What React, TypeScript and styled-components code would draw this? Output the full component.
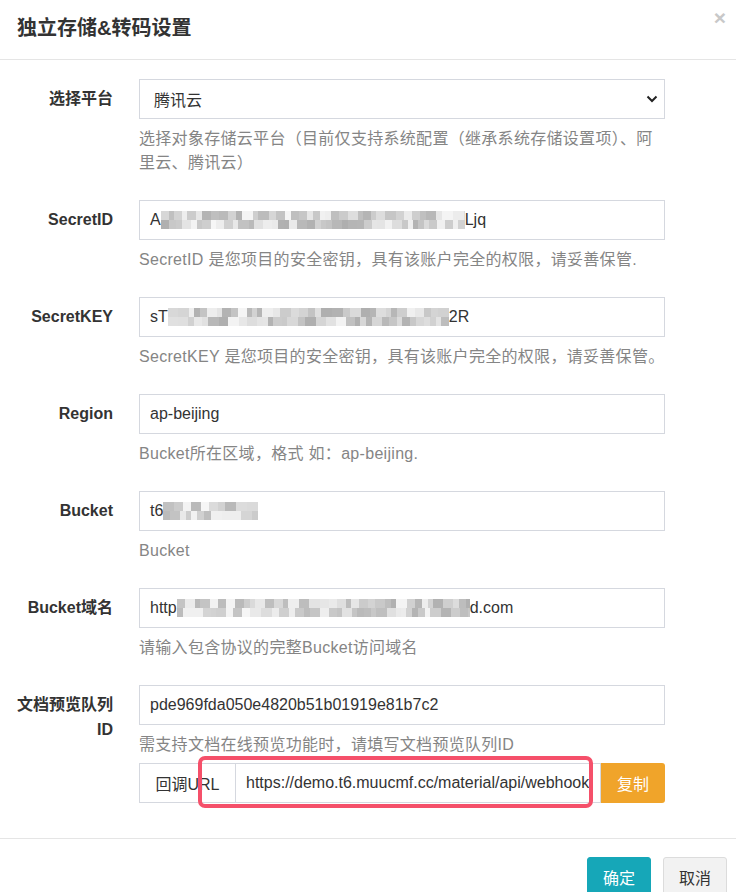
import React, { FC } from 'react';
import styled, { createGlobalStyle } from 'styled-components';

const fontStack = `"Liberation Sans", "Noto Sans CJK SC", sans-serif`;

const GlobalStyle = createGlobalStyle`
  html, body {
    margin: 0;
    padding: 0;
    background: #fff;
  }
  body {
    font-family: ${fontStack};
    color: #333;
  }
`;

const Modal = styled.div`
  width: 736px;
  height: 892px;
  overflow: hidden;
  background: #fff;
`;

const Header = styled.div`
  position: relative;
  height: 60px;
  padding: 15px 17px 0;
  box-sizing: border-box;
  border-bottom: 1px solid #e5e5e5;
`;

const Title = styled.h4`
  margin: 0;
  font-size: 20px;
  line-height: 26px;
  font-weight: bold;
  color: #333;
`;

const Close = styled.span`
  position: absolute;
  top: 6px;
  right: 10px;
  font-size: 21px;
  font-weight: bold;
  color: #c8c8c8;
  line-height: 24px;
`;

const Body = styled.div`
  padding: 19px 0 10px 15px;
`;

const Row = styled.div`
  display: grid;
  grid-template-columns: 98px 526px;
  column-gap: 26px;
  margin-bottom: 25px;
`;

const Label = styled.label`
  text-align: right;
  font-size: 16px;
  font-weight: bold;
  line-height: 25px;
  padding-top: 7px;
  color: #333;
`;

const Field = styled.div`
  display: flex;
  flex-direction: column;
`;

const Input = styled.div`
  height: 40px;
  box-sizing: border-box;
  border: 1px solid #d5d8df;
  padding: 0 10px;
  display: flex;
  align-items: center;
  font-size: 16px;
  color: #333;
  white-space: nowrap;
  overflow: hidden;
`;

const Select = styled(Input)`
  justify-content: space-between;
  padding: 0 6px 0 14px;
`;

const Help = styled.div`
  margin-top: 8px;
  font-size: 16px;
  line-height: 24px;
  letter-spacing: 0.3px;
  color: #858585;
`;

const MosaicStrip = styled.span`
  display: inline-flex;
  flex-direction: column;
  height: 18px;
`;

const MosaicLine = styled.span`
  display: flex;
  height: 9px;
`;

const Cell = styled.span`
  display: block;
  height: 9px;
`;

const Group = styled.div`
  position: relative;
  display: flex;
  height: 40px;
  margin-top: 6px;
`;

const Addon = styled.span`
  width: 96px;
  box-sizing: border-box;
  border: 1px solid #d5d8df;
  border-right: none;
  display: flex;
  align-items: center;
  justify-content: center;
  font-size: 16px;
  color: #333;
`;

const GroupInput = styled(Input)`
  flex: 1;
  padding: 0 8px 0 10px;
`;

const CopyButton = styled.button`
  width: 64px;
  border: none;
  border-radius: 0 3px 3px 0;
  background: #f0a42a;
  color: #fff;
  font-family: ${fontStack};
  font-size: 16px;
`;

const Highlight = styled.span`
  position: absolute;
  left: 59px;
  top: -7px;
  width: 395px;
  height: 52px;
  box-sizing: border-box;
  border: 4px solid #f5506a;
  border-radius: 7px;
  pointer-events: none;
`;

const Footer = styled.div`
  border-top: 1px solid #e5e5e5;
  padding: 18px 9px 0 0;
  display: flex;
  justify-content: flex-end;
  gap: 12px;
`;

const Button = styled.button<{ primary?: boolean }>`
  width: 64px;
  height: 40px;
  border-radius: 3px;
  font-family: ${fontStack};
  font-size: 16px;
  border: 1px solid ${(p) => (p.primary ? '#16a7b8' : '#dcdcdc')};
  background: ${(p) => (p.primary ? '#16a7b8' : '#f2f2f2')};
  color: ${(p) => (p.primary ? '#fff' : '#333')};
`;

const Chevron: FC = () => (
  <svg width="12" height="8" viewBox="0 0 12 8">
    <path d="M1.5 1.5 L6 6 L10.5 1.5" fill="none" stroke="#222" strokeWidth="2" />
  </svg>
);

// pixelated "blurred" secret, tones picked from a small seeded generator
const Mosaic: FC<{ w: number; seed: number }> = ({ w, seed }) => {
  let s = seed;
  const rnd = () => {
    s = (s * 9301 + 49297) % 233280;
    return s / 233280;
  };
  const line = () => {
    const cells: { w: number; c: number }[] = [];
    let used = 0;
    while (used < w) {
      const cw = Math.min(w - used, 5 + Math.floor(rnd() * 7));
      cells.push({ w: cw, c: 175 + Math.floor(rnd() * 72) });
      used += cw;
    }
    return cells;
  };
  const rows = [line(), line()];
  return (
    <MosaicStrip>
      {rows.map((r, i) => (
        <MosaicLine key={i}>
          {r.map((c, j) => (
            <Cell key={j} style={{ width: c.w, background: `rgb(${c.c},${c.c},${c.c})` }} />
          ))}
        </MosaicLine>
      ))}
    </MosaicStrip>
  );
};

interface FormRowProps {
  label: string;
  help?: React.ReactNode;
  extra?: React.ReactNode;
  children: React.ReactNode;
}

const FormRow: FC<FormRowProps> = ({ label, help, extra, children }) => (
  <Row>
    <Label>{label}</Label>
    <Field>
      {children}
      {help && <Help>{help}</Help>}
      {extra}
    </Field>
  </Row>
);

const App: FC = () => (
  <Modal>
    <GlobalStyle />
    <Header>
      <Title>独立存储&amp;转码设置</Title>
      <Close>×</Close>
    </Header>
    <Body>
      <FormRow label="选择平台" help="选择对象存储云平台（目前仅支持系统配置（继承系统存储设置项）、阿里云、腾讯云）">
        <Select>
          腾讯云
          <Chevron />
        </Select>
      </FormRow>
      <FormRow label="SecretID" help="SecretID 是您项目的安全密钥，具有该账户完全的权限，请妥善保管.">
        <Input>
          A<Mosaic w={304} seed={7} />Ljq
        </Input>
      </FormRow>
      <FormRow label="SecretKEY" help="SecretKEY 是您项目的安全密钥，具有该账户完全的权限，请妥善保管。">
        <Input>
          sT<Mosaic w={281} seed={13} />2R
        </Input>
      </FormRow>
      <FormRow label="Region" help="Bucket所在区域，格式 如：ap-beijing.">
        <Input>ap-beijing</Input>
      </FormRow>
      <FormRow label="Bucket" help="Bucket">
        <Input>
          t6<Mosaic w={95} seed={21} />
        </Input>
      </FormRow>
      <FormRow label="Bucket域名" help="请输入包含协议的完整Bucket访问域名">
        <Input>
          http<Mosaic w={293} seed={33} />d.com
        </Input>
      </FormRow>
      <FormRow
        label="文档预览队列ID"
        help="需支持文档在线预览功能时，请填写文档预览队列ID"
        extra={
          <Group>
            <Addon>回调URL</Addon>
            <GroupInput>https://demo.t6.muucmf.cc/material/api/webhook</GroupInput>
            <CopyButton>复制</CopyButton>
            <Highlight />
          </Group>
        }
      >
        <Input>pde969fda050e4820b51b01919e81b7c2</Input>
      </FormRow>
    </Body>
    <Footer>
      <Button primary>确定</Button>
      <Button>取消</Button>
    </Footer>
  </Modal>
);

export default App;
